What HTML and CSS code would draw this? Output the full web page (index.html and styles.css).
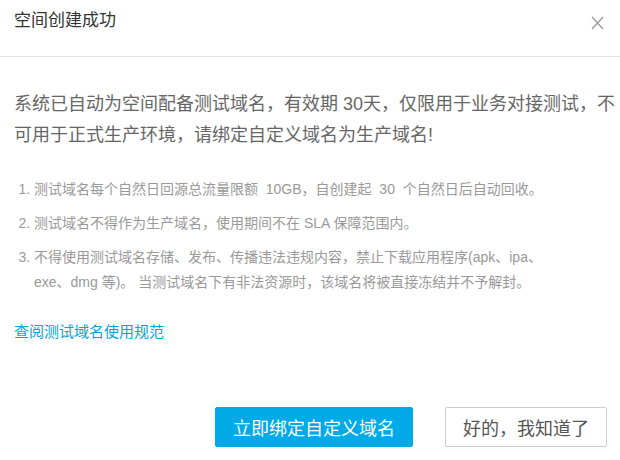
FILE: index.html
```html
<!DOCTYPE html>
<html lang="zh-CN">
<head>
    <meta charset="UTF-8">
    <meta name="viewport" content="width=device-width, initial-scale=1.0">
    <title>空间创建成功</title>
    <link rel="stylesheet" href="styles.css">
</head>
<body>

    <div class="dialog">
        <div class="dialog-header">
            <h2 class="dialog-title">空间创建成功</h2>
            <button type="button" class="close-btn" aria-label="关闭">
                <svg width="13" height="14" viewBox="0 0 13 14">
                    <path d="M1 1 L12 13 M12 1 L1 13" stroke="#999" stroke-width="1.3" fill="none"/>
                </svg>
            </button>
        </div>

        <div class="dialog-body">
            <p class="notice">系统已自动为空间配备测试域名，有效期 30天，仅限用于业务对接测试，不可用于正式生产环境，请绑定自定义域名为生产域名!</p>

            <ol class="rules">
                <li>测试域名每个自然日回源总流量限额 &nbsp;10GB，自创建起 &nbsp;30 &nbsp;个自然日后自动回收。</li>
                <li>测试域名不得作为生产域名，使用期间不在 SLA 保障范围内。</li>
                <li>不得使用测试域名存储、发布、传播违法违规内容，禁止下载应用程序(apk、ipa、exe、dmg 等)。 当测试域名下有非法资源时，该域名将被直接冻结并不予解封。</li>
            </ol>

            <a href="#" class="link">查阅测试域名使用规范</a>
        </div>

        <div class="dialog-footer">
            <button type="button" class="button primary">立即绑定自定义域名</button>
            <button type="button" class="button">好的，我知道了</button>
        </div>
    </div>

</body>
</html>
```

FILE: styles.css
```css
body {
    font-family: "Liberation Sans", "Noto Sans CJK SC", sans-serif;
    background-color: #ffffff;
    margin: 0;
}
.dialog {
    height: 460px;
    display: flex;
    flex-direction: column;
    box-sizing: border-box;
}
.dialog-header {
    height: 46px;
    padding: 10px 14px 0 14px;
    border-bottom: 1px solid #e5e5e5;
    display: flex;
    justify-content: space-between;
    align-items: flex-start;
}
.dialog-title {
    margin: 0;
    font-size: 17px;
    font-weight: normal;
    line-height: 22px;
    color: #333;
}
.close-btn {
    border: none;
    background: none;
    padding: 0;
    margin: 6px 2px 0 0;
    width: 13px;
    height: 14px;
    display: flex;
    cursor: pointer;
}
.dialog-body {
    padding: 32px 4px 0 14px;
}
.notice {
    margin: 0;
    font-size: 18px;
    line-height: 31px;
    color: #666;
}
.rules {
    margin: 26px 0 0 0;
    padding: 0 50px 0 20px;
    font-size: 14px;
    line-height: 25px;
    color: #999;
}
.rules li + li {
    margin-top: 9px;
}
.link {
    display: inline-block;
    margin-top: 27px;
    font-size: 15px;
    line-height: 20px;
    color: #00a4e0;
    text-decoration: none;
}
.dialog-footer {
    margin-top: auto;
    padding: 0 13px 13px 0;
    display: flex;
    justify-content: flex-end;
    gap: 32px;
}
.button {
    height: 40px;
    padding: 0 17px;
    font-family: inherit;
    font-size: 18px;
    color: #555;
    background-color: #fff;
    border: 1px solid #ccc;
    border-radius: 2px;
    cursor: pointer;
}
.button.primary {
    color: #fff;
    background-color: #00aae7;
    border-color: #00aae7;
}
```
